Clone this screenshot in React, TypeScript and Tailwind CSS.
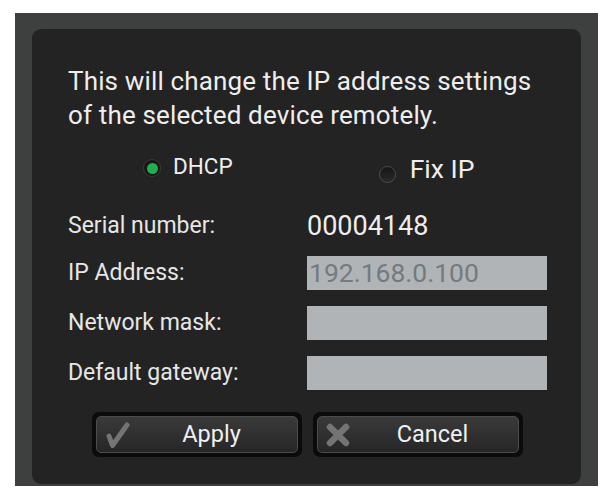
import React from "react";

function CheckIcon() {
  return (
    <svg width="26" height="26" viewBox="0 0 26 26" className="shrink-0">
      <path
        d="M5 14 L8.5 23.5 L23 3"
        fill="none"
        stroke="#747474"
        strokeWidth="5"
        strokeLinecap="round"
        strokeLinejoin="round"
      />
    </svg>
  );
}

function CrossIcon() {
  return (
    <svg width="26" height="26" viewBox="0 0 26 26" className="shrink-0">
      <path
        d="M5 5 L21 21 M21 5 L5 21"
        fill="none"
        stroke="#747474"
        strokeWidth="6.5"
        strokeLinecap="round"
      />
    </svg>
  );
}

function Field({ label, value }: { label: string; value?: string }) {
  return (
    <div className="flex items-center h-[34px]">
      <span className="w-[239px] text-[23px] text-[#e6e6e6]">{label}</span>
      <div className="w-[240px] h-[34px] bg-[#b1b4b6] pl-[2px] flex items-center text-[26.5px] text-[#737a80] leading-none">
        {value}
      </div>
    </div>
  );
}

function DialogButton({ icon, label }: { icon: React.ReactNode; label: string }) {
  return (
    <div className="w-[210px] h-[45px] rounded-[7px] bg-[#0b0b0b] p-[4px]">
      <div className="h-full rounded-[5px] border border-[#4c4c4c] bg-gradient-to-b from-[#3a3a3a] to-[#262626] flex items-center pl-[7px]">
        {icon}
        <span className="flex-1 text-center pr-[4px] pt-[1px] text-[23.5px] text-[#f0f0f0]">
          {label}
        </span>
      </div>
    </div>
  );
}

export default function App() {
  return (
    <div
      className="w-[606px] h-[494px] bg-white pt-[13px] pl-[15px]"
      style={{ fontFamily: "Roboto, 'Liberation Sans', sans-serif" }}
    >
      <div className="w-[583px] h-[473px] bg-[#3e4040] pt-[16px] pl-[17px]">
        <div className="w-[549px] h-[455px] rounded-[9px] bg-[#232323] flex flex-col pl-[36px] pt-[35px]">
          <p className="text-[26px] leading-[34px] tracking-[0.15px] text-[#eeeeee]">
            This will change the IP address settings
            <br />
            of the selected device remotely.
          </p>

          <div className="flex mt-[21px] h-[40px]">
            <div className="flex items-start ml-[75px]">
              <span className="mt-[6px] w-[18px] h-[18px] rounded-full bg-[#161616] border border-[#3a3a3a] flex items-center justify-center">
                <span className="w-[11px] h-[11px] rounded-full bg-[#1fb04a]" />
              </span>
              <span className="ml-[12px] text-[22.5px] leading-[26px] text-[#eeeeee]">DHCP</span>
            </div>
            <div className="flex items-start ml-[146px]">
              <span className="mt-[13px] w-[17px] h-[17px] rounded-full bg-gradient-to-b from-[#151515] to-[#2a2a2a] border-[1.5px] border-[#4d4d4d]" />
              <span className="ml-[14px] mt-[1px] text-[26.5px] leading-[30px] text-[#eeeeee]">Fix IP</span>
            </div>
          </div>

          <div className="flex flex-col gap-[16px] mt-[13px]">
            <div className="flex items-center h-[34px] pt-[7px]">
              <span className="w-[239px] text-[23px] text-[#e6e6e6]">Serial number:</span>
              <span className="text-[27px] text-[#eeeeee]">00004148</span>
            </div>
            <Field label="IP Address:" value="192.168.0.100" />
            <Field label="Network mask:" />
            <Field label="Default gateway:" />
          </div>

          <div className="flex gap-[11px] mt-[22px] ml-[24px]">
            <DialogButton icon={<CheckIcon />} label="Apply" />
            <DialogButton icon={<CrossIcon />} label="Cancel" />
          </div>
        </div>
      </div>
    </div>
  );
}
